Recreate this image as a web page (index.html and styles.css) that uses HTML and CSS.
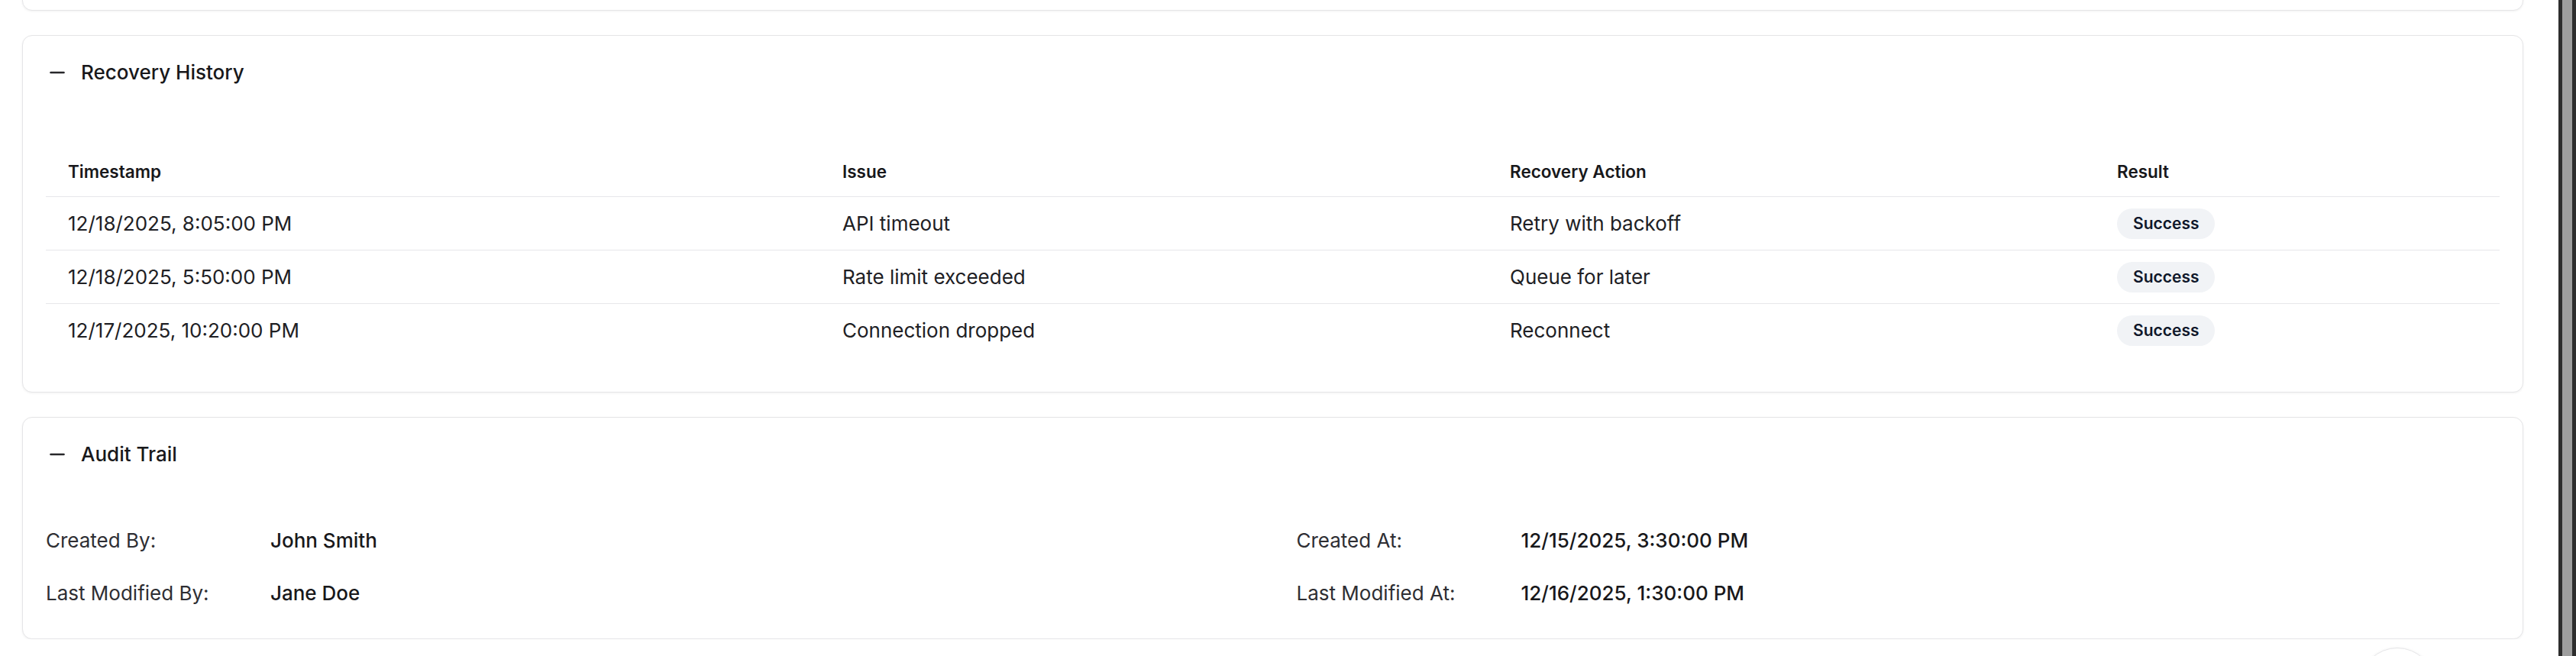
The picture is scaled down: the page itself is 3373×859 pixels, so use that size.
FILE: index.html
```html
<!DOCTYPE html>
<html lang="en">
<head>
  <meta charset="UTF-8">
  <meta name="viewport" content="width=device-width, initial-scale=1.0">
  <title>Recovery History</title>
  <link rel="stylesheet" href="styles.css">
</head>
<body>
  <div class="page">
    <div class="card card-prev"></div>

    <section class="card">
      <div class="card-header">
        <svg class="toggle" viewBox="0 0 20 20" width="20" height="20"><path d="M1.5 10h17"/></svg>
        <h2>Recovery History</h2>
      </div>
      <div class="card-body">
        <table class="history">
          <thead>
            <tr>
              <th class="col-time">Timestamp</th>
              <th class="col-issue">Issue</th>
              <th class="col-action">Recovery Action</th>
              <th>Result</th>
            </tr>
          </thead>
          <tbody>
            <tr>
              <td>12/18/2025, 8:05:00 PM</td>
              <td>API timeout</td>
              <td>Retry with backoff</td>
              <td><span class="badge">Success</span></td>
            </tr>
            <tr>
              <td>12/18/2025, 5:50:00 PM</td>
              <td>Rate limit exceeded</td>
              <td>Queue for later</td>
              <td><span class="badge">Success</span></td>
            </tr>
            <tr>
              <td>12/17/2025, 10:20:00 PM</td>
              <td>Connection dropped</td>
              <td>Reconnect</td>
              <td><span class="badge">Success</span></td>
            </tr>
          </tbody>
        </table>
      </div>
    </section>

    <section class="card">
      <div class="card-header">
        <svg class="toggle" viewBox="0 0 20 20" width="20" height="20"><path d="M1.5 10h17"/></svg>
        <h2>Audit Trail</h2>
      </div>
      <div class="card-body audit-body">
        <div class="audit-grid">
          <div class="field"><span class="label">Created By:</span><span class="value">John Smith</span></div>
          <div class="field"><span class="label">Created At:</span><span class="value">12/15/2025, 3:30:00 PM</span></div>
          <div class="field"><span class="label">Last Modified By:</span><span class="value">Jane Doe</span></div>
          <div class="field"><span class="label">Last Modified At:</span><span class="value">12/16/2025, 1:30:00 PM</span></div>
        </div>
      </div>
    </section>
  </div>

  <div class="fab"></div>
  <div class="scrollbar"></div>
</body>
</html>
```

FILE: styles.css
```css
body {
  margin: 0;
  padding: 0;
  background-color: #fff;
  font-family: Inter, "Noto Sans", sans-serif;
  color: #18181b;
  overflow: hidden;
}

.page {
  display: flex;
  flex-direction: column;
  gap: 32px;
  padding: 0 69px 0 29px;
}

.card {
  background-color: #fff;
  border: 1px solid #e5e5e7;
  border-radius: 13px;
  box-shadow: 0 1px 3px rgba(0,0,0,0.06);
}

/* bottom of the card above, scrolled out of view */
.card-prev {
  height: 58px;
  margin-top: -46px;
}

.card-header {
  display: flex;
  align-items: center;
  padding: 32px 35px 0;
  height: 32px;
}

.card-header h2 {
  margin: 0;
  font-size: 26px;
  font-weight: 500;
  line-height: 32px;
  color: #18181b;
}

.toggle {
  margin-right: 21px;
  fill: none;
  stroke: #27272a;
  stroke-width: 2.6;
  stroke-linecap: round;
}

.card-body {
  padding: 81px 30px 46px 30px;
}

.audit-body {
  padding-top: 79px;
  padding-bottom: 41px;
}

/* Table */
.history {
  width: 100%;
  border-collapse: collapse;
  table-layout: fixed;
}

.history th {
  height: 65px;
  padding: 0 29px;
  text-align: left;
  font-size: 22.5px;
  font-weight: 600;
  color: #18181b;
  border-bottom: 1px solid #e7e7ea;
}

.history .col-time { width: 956px; }
.history .col-issue { width: 816px; }
.history .col-action { width: 737px; }

.history td {
  height: 69px;
  padding: 0 29px;
  font-size: 26px;
  color: #202024;
  border-bottom: 1px solid #e7e7ea;
}

.history tbody tr:last-child td {
  border-bottom: none;
}

.badge {
  display: inline-block;
  padding: 0 21px;
  height: 40px;
  line-height: 40px;
  border-radius: 20px;
  background-color: #f1f3f6;
  color: #0f172a;
  font-size: 21px;
  font-weight: 600;
}

/* Audit */
.audit-grid {
  display: grid;
  grid-template-columns: 1fr 1fr;
  column-gap: 62px;
  row-gap: 33px;
}

.field {
  display: flex;
  line-height: 36px;
  font-size: 26px;
}

.label {
  width: 294px;
  flex-shrink: 0;
  color: #2e2e33;
}

.value {
  font-weight: 500;
  color: #18181b;
}

.fab {
  position: fixed;
  right: 185px;
  bottom: -87px;
  width: 96px;
  height: 96px;
  border-radius: 50%;
  background-color: #fff;
  border: 1px solid #e5e5e7;
  box-shadow: 0 1px 4px rgba(0,0,0,0.08);
}

.scrollbar {
  position: fixed;
  top: 0;
  right: 0;
  bottom: 0;
  width: 13px;
  background-color: #9e9e9e;
  border-left: 5px solid #2d2d2d;
  border-right: 5px solid #2d2d2d;
}
```
